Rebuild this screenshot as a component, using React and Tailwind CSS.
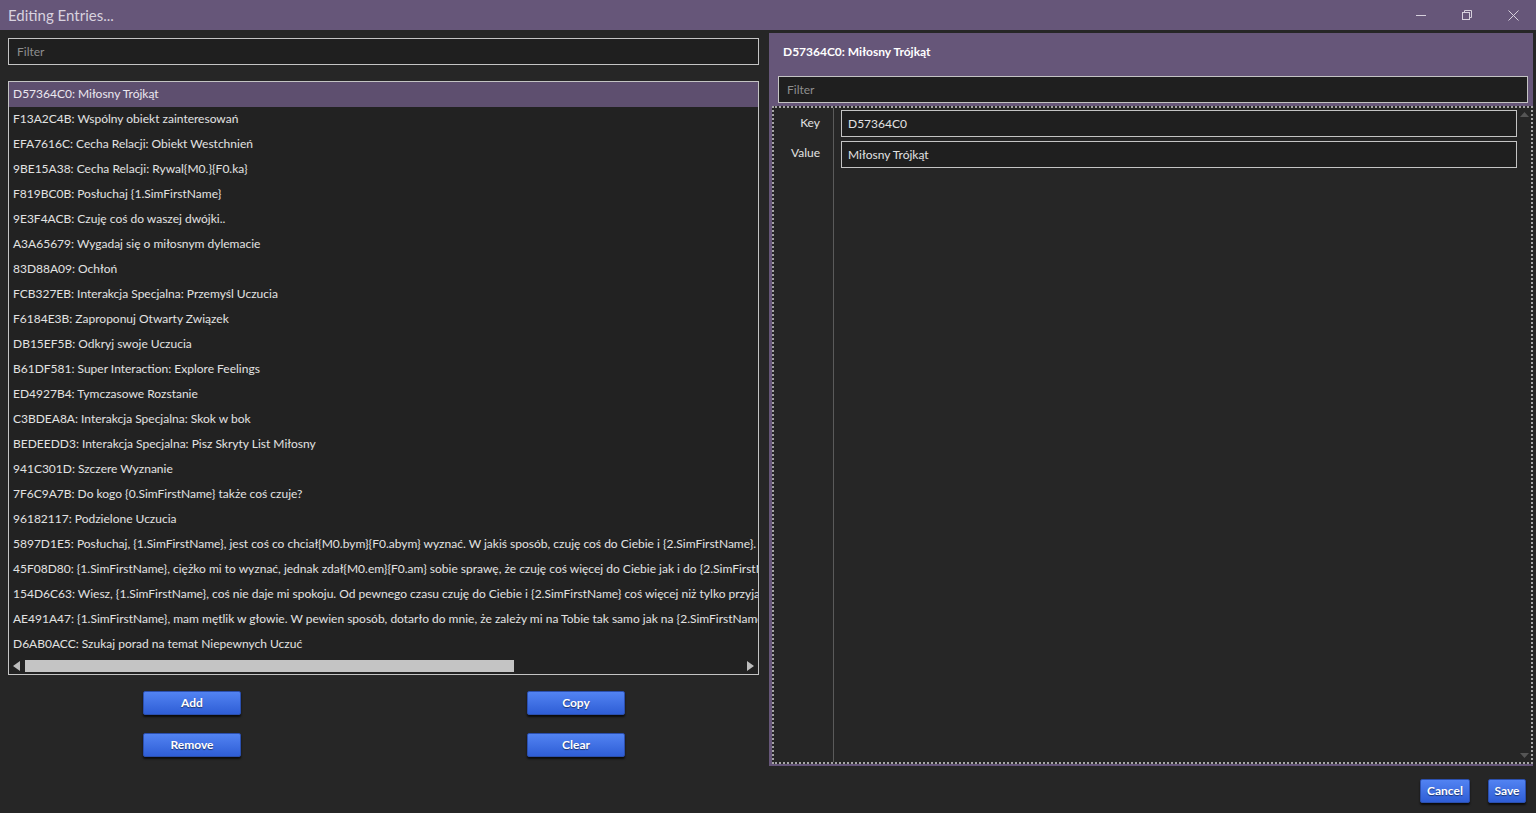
import React from 'react';

const entries = [
  'D57364C0: Miłosny Trójkąt',
  'F13A2C4B: Wspólny obiekt zainteresowań',
  'EFA7616C: Cecha Relacji: Obiekt Westchnień',
  '9BE15A38: Cecha Relacji: Rywal{M0.}{F0.ka}',
  'F819BC0B: Posłuchaj {1.SimFirstName}',
  '9E3F4ACB: Czuję coś do waszej dwójki..',
  'A3A65679: Wygadaj się o miłosnym dylemacie',
  '83D88A09: Ochłoń',
  'FCB327EB: Interakcja Specjalna: Przemyśl Uczucia',
  'F6184E3B: Zaproponuj Otwarty Związek',
  'DB15EF5B: Odkryj swoje Uczucia',
  'B61DF581: Super Interaction: Explore Feelings',
  'ED4927B4: Tymczasowe Rozstanie',
  'C3BDEA8A: Interakcja Specjalna: Skok w bok',
  'BEDEEDD3: Interakcja Specjalna: Pisz Skryty List Miłosny',
  '941C301D: Szczere Wyznanie',
  '7F6C9A7B: Do kogo {0.SimFirstName} także coś czuje?',
  '96182117: Podzielone Uczucia',
  '5897D1E5: Posłuchaj, {1.SimFirstName}, jest coś co chciał{M0.bym}{F0.abym} wyznać. W jakiś sposób, czuję coś do Ciebie i {2.SimFirstName}. Tak bardzo',
  '45F08D80: {1.SimFirstName}, ciężko mi to wyznać, jednak zdał{M0.em}{F0.am} sobie sprawę, że czuję coś więcej do Ciebie jak i do {2.SimFirstName}.',
  '154D6C63: Wiesz, {1.SimFirstName}, coś nie daje mi spokoju. Od pewnego czasu czuję do Ciebie i {2.SimFirstName} coś więcej niż tylko przyjaźń.',
  'AE491A47: {1.SimFirstName}, mam mętlik w głowie. W pewien sposób, dotarło do mnie, że zależy mi na Tobie tak samo jak na {2.SimFirstName}.',
  'D6AB0ACC: Szukaj porad na temat Niepewnych Uczuć',
];

const font = { fontFamily: 'Lato, "Noto Sans", sans-serif' };

const Btn = ({ children, w = 'w-[98px]' }) => (
  <button
    className={`${w} h-[24px] rounded-[2px] bg-gradient-to-b from-[#5283f2] to-[#2f5ed6] text-white text-[12px] font-bold shadow-[0_2px_2px_rgba(0,0,0,0.7)] border border-[#2b4fae] [text-shadow:0_1px_1px_rgba(0,0,0,0.5)]`}
  >
    {children}
  </button>
);

const Field = ({ value, placeholder, className = '' }) => (
  <div
    className={`h-[27px] border border-[#c4c4c4] bg-[#1f1f1f] flex items-center px-[8px] text-[12px] ${
      value ? 'text-[#e2e2e2]' : 'text-[#8e8e8e]'
    } ${className}`}
  >
    {value || placeholder}
  </div>
);

export default function App() {
  return (
    <div className="w-[1536px] h-[813px] bg-[#262626] flex flex-col overflow-hidden" style={font}>
      {/* title bar */}
      <div className="h-[30px] bg-[#665679] flex items-center justify-between shrink-0">
        <span className="pl-[8px] text-[15px] text-[#d8d2df]">Editing Entries...</span>
        <div className="flex items-center h-full">
          <div className="w-[46px] h-full flex items-center justify-center">
            <svg width="10" height="10" viewBox="0 0 10 10">
              <path d="M0 5.5h10" stroke="#d6d0dc" strokeWidth="1" />
            </svg>
          </div>
          <div className="w-[46px] h-full flex items-center justify-center">
            <svg width="10" height="10" viewBox="0 0 10 10" fill="none" stroke="#d6d0dc" strokeWidth="1">
              <rect x="0.5" y="2.5" width="7" height="7" />
              <path d="M2.5 2.5V0.5h7v7h-2" />
            </svg>
          </div>
          <div className="w-[46px] h-full flex items-center justify-center">
            <svg width="11" height="11" viewBox="0 0 11 11" stroke="#d6d0dc" strokeWidth="1">
              <path d="M0.5 0.5l10 10M10.5 0.5l-10 10" />
            </svg>
          </div>
        </div>
      </div>

      <div className="flex flex-1 min-h-0">
        {/* left panel */}
        <div className="w-[768px] shrink-0 flex flex-col">
          <div className="pl-[8px] pr-[9px] pt-[8px]">
            <Field placeholder="Filter" />
            <div className="mt-[16px] h-[594px] border border-[#c4c4c4] bg-[#222222] flex flex-col">
              <div className="flex-1 overflow-hidden">
                {entries.map((e, i) => (
                  <div
                    key={e}
                    className={`h-[25px] flex items-center pl-[4px] pb-[1px] text-[12px] whitespace-nowrap ${
                      i === 0 ? 'bg-[#5e4f6f] text-[#ece8f0]' : 'text-[#e2e2e2]'
                    }`}
                  >
                    {e}
                  </div>
                ))}
              </div>
              <div className="h-[16px] flex items-center px-[4px] gap-[4px] shrink-0">
                <svg width="7" height="10" viewBox="0 0 7 10">
                  <path d="M7 0L0 5l7 5z" fill="#bdbdbd" />
                </svg>
                <div className="w-[489px] h-[12px] bg-[#c4c4c4] ml-[1px]" />
                <div className="flex-1" />
                <svg width="7" height="10" viewBox="0 0 7 10">
                  <path d="M0 0l7 5-7 5z" fill="#bdbdbd" />
                </svg>
              </div>
            </div>
          </div>
          <div className="grid grid-cols-2 mt-[16px] gap-y-[18px] justify-items-center">
            <Btn>Add</Btn>
            <Btn>Copy</Btn>
            <Btn>Remove</Btn>
            <Btn>Clear</Btn>
          </div>
        </div>

        {/* right panel */}
        <div className="flex-1 flex flex-col pt-[3px] pr-[3px] pl-[1px]">
          <div className="h-[733px] bg-[#665679] flex flex-col pl-[3px]">
            <div className="h-[43px] flex items-center pl-[11px] pb-[6px] text-[12px] font-bold text-white shrink-0">
              D57364C0: Miłosny Trójkąt
            </div>
            <div className="pl-[6px] pr-[5px]">
              <Field placeholder="Filter" />
            </div>
            <div className="flex-1 mt-[3px] mb-[2px] bg-[#262626] border-2 border-dotted border-[#a5a5a5] flex">
              <div className="w-[59px] shrink-0 flex flex-col items-end pr-[13px] pt-[2px] text-[12px] text-[#e2e2e2]">
                <div className="h-[26px] flex items-center">Key</div>
                <div className="h-[26px] mt-[4px] flex items-center">Value</div>
              </div>
              <div className="w-[1px] bg-[#5a5a5a]" />
              <div className="flex-1 flex flex-col gap-[4px] pt-[2px] pl-[7px]">
                <Field value="D57364C0" className="h-[26px] !px-[6px]" />
                <Field value="Miłosny Trójkąt" className="h-[26px] !px-[6px]" />
              </div>
              <div className="w-[14px] shrink-0 flex flex-col items-center justify-between py-[4px]">
                <svg width="9" height="5" viewBox="0 0 9 5">
                  <path d="M0 5L4.5 0 9 5z" fill="#555" />
                </svg>
                <svg width="9" height="5" viewBox="0 0 9 5">
                  <path d="M0 0l4.5 5L9 0z" fill="#555" />
                </svg>
              </div>
            </div>
          </div>
          <div className="flex justify-end gap-[18px] mt-[13px] pr-[7px]">
            <Btn w="w-[50px]">Cancel</Btn>
            <Btn w="w-[38px]">Save</Btn>
          </div>
        </div>
      </div>
    </div>
  );
}
